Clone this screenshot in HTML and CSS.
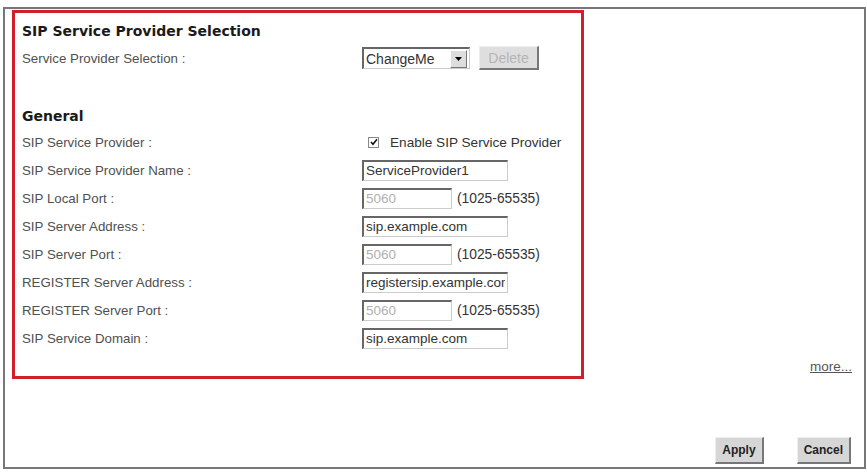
FILE: index.html
```html
<!DOCTYPE html>
<html lang="en">
<head>
  <meta charset="UTF-8">
  <title>SIP Service Provider</title>
  <link rel="stylesheet" href="styles.css">
</head>
<body>
  <div class="frame">
    <div class="top">
      <section class="panel">
        <h2 class="title">SIP Service Provider Selection</h2>
        <div class="row">
          <span class="label">Service Provider Selection :</span>
          <div class="ctrl">
            <div class="select">
              <span class="select-text">ChangeMe</span>
              <span class="select-arrow">
                <svg width="7" height="4" viewBox="0 0 7 4"><path d="M0 0h7L3.5 4z" fill="#000"/></svg>
              </span>
            </div>
            <button class="btn btn-off" type="button" disabled>Delete</button>
          </div>
        </div>

        <h2 class="title title-general">General</h2>
        <div class="rows">
          <div class="row">
            <span class="label">SIP Service Provider :</span>
            <label class="ctrl check">
              <span class="box">
                <svg width="8" height="8" viewBox="0 0 8 8"><path d="M1 4l2 2.2L7 1.2" fill="none" stroke="#111" stroke-width="1.6"/></svg>
              </span>
              Enable SIP Service Provider
            </label>
          </div>
          <div class="row">
            <span class="label">SIP Service Provider Name :</span>
            <div class="ctrl"><input class="field" type="text" value="ServiceProvider1"></div>
          </div>
          <div class="row">
            <span class="label">SIP Local Port :</span>
            <div class="ctrl"><input class="field short" type="text" value="5060" disabled><span class="hint">(1025-65535)</span></div>
          </div>
          <div class="row">
            <span class="label">SIP Server Address :</span>
            <div class="ctrl"><input class="field" type="text" value="sip.example.com"></div>
          </div>
          <div class="row">
            <span class="label">SIP Server Port :</span>
            <div class="ctrl"><input class="field short" type="text" value="5060" disabled><span class="hint">(1025-65535)</span></div>
          </div>
          <div class="row">
            <span class="label">REGISTER Server Address :</span>
            <div class="ctrl"><input class="field" type="text" value="registersip.example.com"></div>
          </div>
          <div class="row">
            <span class="label">REGISTER Server Port :</span>
            <div class="ctrl"><input class="field short" type="text" value="5060" disabled><span class="hint">(1025-65535)</span></div>
          </div>
          <div class="row">
            <span class="label">SIP Service Domain :</span>
            <div class="ctrl"><input class="field" type="text" value="sip.example.com"></div>
          </div>
        </div>
      </section>
      <a class="more" href="#">more...</a>
    </div>

    <div class="actions">
      <button class="btn btn-main" type="button">Apply</button>
      <button class="btn btn-main" type="button">Cancel</button>
    </div>
  </div>
</body>
</html>
```

FILE: styles.css
```css
body {
  margin: 0;
  padding: 7px 0 0 3px;
  background: #fff;
  font-family: 'Liberation Sans', Arial, sans-serif;
  font-size: 13.3px;
  color: #444;
}

.frame {
  box-sizing: border-box;
  width: 863px;
  height: 462px;
  border: 2px solid #777;
  display: flex;
  flex-direction: column;
}

.top {
  display: flex;
  align-items: flex-end;
}

.panel {
  box-sizing: border-box;
  width: 572px;
  height: 369px;
  margin: 1px 0 0 7px;
  padding: 8px 0 0 7px;
  border: 3px solid #d01f28;
}

.title {
  margin: 0 0 3px;
  height: 20px;
  line-height: 20px;
  font-family: 'DejaVu Sans', Verdana, sans-serif;
  font-size: 14px;
  font-weight: bold;
  color: #1a1a1a;
}

.title-general {
  margin: 34px 0 0;
}

.rows {
  margin-top: 2px;
}

.row {
  display: grid;
  grid-template-columns: 340px 1fr;
  align-items: center;
  height: 28px;
}

.label {
  color: #505050;
}

.ctrl {
  display: flex;
  align-items: center;
}

.select {
  box-sizing: border-box;
  width: 108px;
  height: 22px;
  display: flex;
  align-items: center;
  justify-content: space-between;
  border-style: solid;
  border-width: 2px 1px 1px 2px;
  border-color: #666 #ccc #ccc #666;
  padding-left: 2px;
  font-size: 14px;
  color: #333;
}

.select-arrow {
  width: 15px;
  height: 16px;
  margin-right: 2px;
  display: flex;
  align-items: center;
  justify-content: center;
  background: #ddd;
  border-style: solid;
  border-width: 1px;
  border-color: #fff #777 #777 #fff;
}

.btn {
  font-family: 'Liberation Sans', Arial, sans-serif;
  font-size: 12px;
  background: #d6d6d6;
  border-style: solid;
  border-width: 1px 2px 2px 1px;
  border-color: #eee #777 #777 #eee;
  padding: 0;
}

.btn-off {
  margin-left: 9px;
  width: 60px;
  height: 24px;
  font-size: 14px;
  color: #b5b5b5;
  background: #dedede;
}

.check {
  padding-left: 6px;
  gap: 11px;
  color: #333;
  font-size: 13.6px;
}

.box {
  box-sizing: border-box;
  width: 11px;
  height: 11px;
  border: 1px solid #888;
  display: flex;
  align-items: center;
  justify-content: center;
  background: #fff;
}

.field {
  box-sizing: border-box;
  width: 146px;
  height: 21px;
  margin: 0;
  padding: 0 2px;
  font-family: 'Liberation Sans', Arial, sans-serif;
  font-size: 13.5px;
  color: #333;
  background: #fff;
  border-style: solid;
  border-width: 2px 1px 1px 2px;
  border-color: #666 #ccc #ccc #666;
  outline: none;
}

.field.short {
  width: 90px;
}

.field:disabled {
  color: #b0b0b0;
}

.hint {
  margin-left: 5px;
  font-size: 13.8px;
  color: #333;
}

.more {
  margin: 0 12px 5px auto;
  color: #555;
  font-size: 13.5px;
}

.actions {
  margin-top: auto;
  margin-bottom: 3px;
  padding-right: 13px;
  display: flex;
  justify-content: flex-end;
  gap: 33px;
}

.btn-main {
  height: 27px;
  padding: 0 6px;
  font-weight: bold;
  color: #222;
}
```
